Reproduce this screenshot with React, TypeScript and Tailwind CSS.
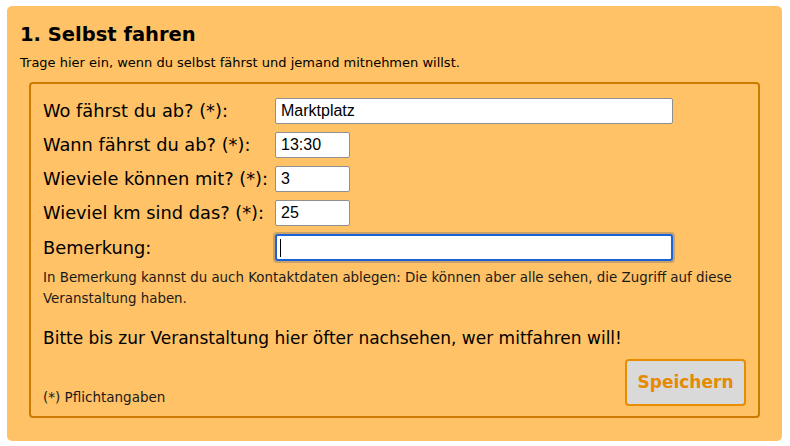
const rows = [
  { label: "Wo fährst du ab? (*):", value: "Marktplatz", wide: true },
  { label: "Wann fährst du ab? (*):", value: "13:30", wide: false },
  { label: "Wieviele können mit? (*):", value: "3", wide: false },
  { label: "Wieviel km sind das? (*):", value: "25", wide: false },
];

function App() {
  return (
    <main className="w-[790px] h-[446px] bg-white pt-[6px] pl-[7px] font-['DejaVu_Sans',Verdana,sans-serif] text-black">
      <section className="w-[775px] h-[435px] bg-[#ffc266] rounded-[5px] pt-[17px] px-[13px]">
        <h1 className="text-[19.5px] font-bold leading-[24px]">1. Selbst fahren</h1>
        <p className="text-[13px] leading-[16px] mt-[8px]">
          Trage hier ein, wenn du selbst fährst und jemand mitnehmen willst.
        </p>

        <form className="mt-[11px] ml-[9px] w-[731px] h-[336px] border-2 border-[#cc7a00] rounded-[4px] pt-[14px] pl-[12px] pr-[12px] flex flex-col">
          <div className="flex flex-col gap-[8px]">
            {rows.map((row) => (
              <div key={row.label} className="flex items-center h-[26px]">
                <label className="w-[232px] text-[17.8px] leading-[20px]">{row.label}</label>
                <input
                  readOnly
                  value={row.value}
                  className={`${row.wide ? "w-[398px]" : "w-[75px]"} h-[26px] bg-white border border-[#8f8f8f] rounded-[2px] px-[5px] text-[16px] font-['Liberation_Sans',Arial,sans-serif] outline-none`}
                />
              </div>
            ))}
            <div className="flex items-center h-[27px]">
              <label className="w-[230px] text-[17.8px] leading-[20px]">Bemerkung:</label>
              <div className="rounded-[4px] p-[2px] bg-[#c9a26a]">
                <div className="w-[398px] h-[27px] bg-white border-2 border-[#1a62d6] rounded-[3px] flex items-center pl-[3px]">
                  <span className="w-px h-[18px] bg-black" />
                </div>
              </div>
            </div>
          </div>

          <p className="text-[13.4px] leading-[21px] mt-[6px] text-[#1a1a1a]">
            In Bemerkung kannst du auch Kontaktdaten ablegen: Die können aber alle sehen, die Zugriff auf diese
            Veranstaltung haben.
          </p>

          <p className="text-[17px] leading-[20px] mt-[19px]">
            Bitte bis zur Veranstaltung hier öfter nachsehen, wer mitfahren will!
          </p>

          <div className="flex items-end justify-between mt-auto pb-[10px]">
            <span className="text-[13.5px] leading-[16px] text-[#1a1a1a] pb-[1px]">(*) Pflichtangaben</span>
            <button
              type="button"
              className="w-[121px] h-[47px] bg-[#d9d9d9] border-2 border-[#e88c00] rounded-[4px] text-[#e68a00] text-[17px] font-bold"
            >
              Speichern
            </button>
          </div>
        </form>
      </section>
    </main>
  );
}

export default App;
